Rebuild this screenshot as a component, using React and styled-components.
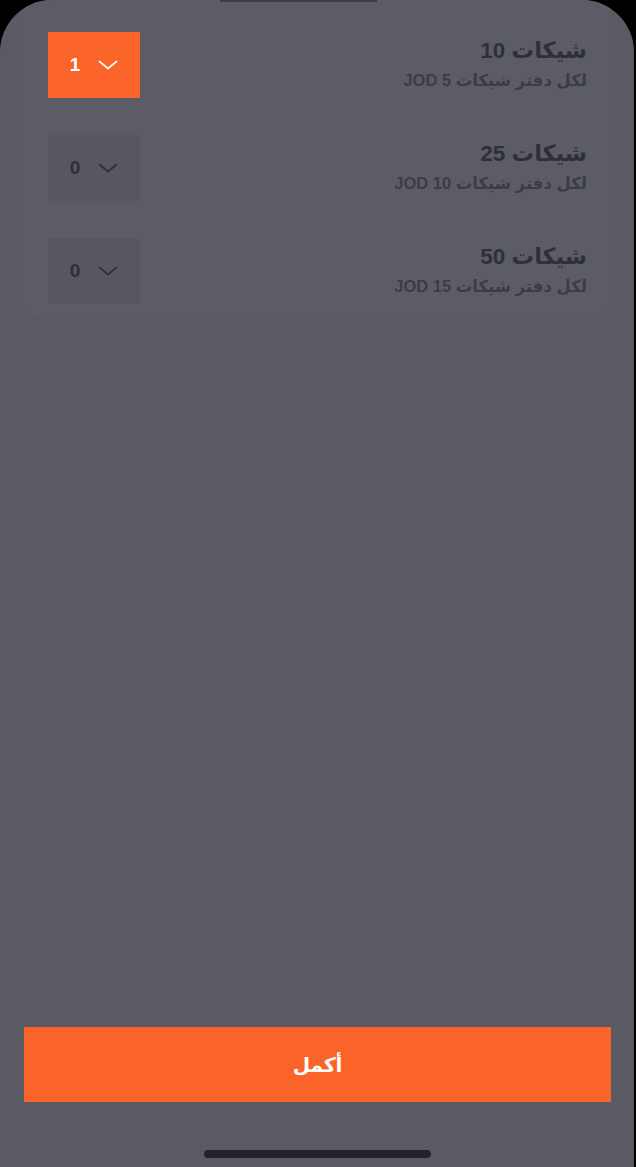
import React, { useState } from 'react';
import styled, { createGlobalStyle } from 'styled-components';

const GlobalStyle = createGlobalStyle`
  html, body {
    margin: 0;
    padding: 0;
    background: #000;
  }
  body {
    font-family: "Liberation Sans", "DejaVu Sans", sans-serif;
  }
`;

const Screen = styled.div`
  position: relative;
  width: calc(100% - 2px);
  height: 1167px;
  background: #5a5a64;
  border-radius: 52px 52px 0 0;
  display: flex;
  flex-direction: column;
  overflow: hidden;
`;

const TopEdge = styled.div`
  position: absolute;
  top: 0;
  left: 220px;
  width: 157px;
  height: 2px;
  background: #3d3d46;
`;

const Card = styled.div`
  margin: 0 24px;
  padding: 32px 23px 14px 24px;
  background: #5c5c66;
  border-radius: 0 0 16px 16px;
  display: flex;
  flex-direction: column;
  gap: 37px;
  direction: rtl;
`;

const Row = styled.div`
  display: flex;
  align-items: center;
  justify-content: space-between;
  height: 66px;
`;

const Info = styled.div`
  display: flex;
  flex-direction: column;
  gap: 6px;
  padding-bottom: 3px;
  text-align: right;
`;

const Title = styled.div`
  font-size: 22.5px;
  line-height: 26px;
  font-weight: 700;
  color: #2f2f39;
`;

const Sub = styled.div`
  font-size: 16.5px;
  line-height: 20px;
  font-weight: 700;
  color: #3c3c46;
`;

const Picker = styled.button`
  direction: ltr;
  width: 92px;
  height: 66px;
  border: none;
  padding: 0;
  display: flex;
  align-items: center;
  justify-content: center;
  gap: 18px;
  cursor: pointer;
  font-family: "Liberation Sans", sans-serif;
  font-size: 19px;
  font-weight: 700;
  background: ${({ active }) => (active ? '#fb6429' : '#57575f')};
  color: ${({ active }) => (active ? '#ffffff' : '#2f2f39')};
`;

const Chevron = ({ color }) => (
  <svg width="20" height="10" viewBox="0 0 20 10" fill="none">
    <path d="M1.5 1.5 L10 8.5 L18.5 1.5" stroke={color} strokeWidth="1.7" strokeLinecap="round" strokeLinejoin="round" />
  </svg>
);

const Spacer = styled.div`
  flex: 1;
`;

const Footer = styled.div`
  padding: 27px 23px 9px 24px;
  display: flex;
  flex-direction: column;
  align-items: center;
  gap: 48px;
`;

const Continue = styled.button`
  width: 100%;
  height: 75px;
  border: none;
  background: #fb6429;
  color: #fff;
  font-family: "DejaVu Sans", sans-serif;
  font-size: 20px;
  font-weight: 700;
  cursor: pointer;
`;

const HomeBar = styled.div`
  width: 227px;
  height: 8px;
  border-radius: 4px;
  background: #22222c;
`;

const books = [
  { count: 10, price: 5 },
  { count: 25, price: 10 },
  { count: 50, price: 15 },
];

export default function App() {
  const [qty, setQty] = useState([1, 0, 0]);

  const bump = (i) =>
    setQty((q) => q.map((v, j) => (j === i ? (v + 1) % 6 : v)));

  return (
    <>
      <GlobalStyle />
      <Screen>
        <TopEdge />
        <Card>
          {books.map((b, i) => (
            <Row key={b.count}>
              <Info>
                <Title>شيكات {b.count}</Title>
                <Sub>لكل دفتر شيكات {b.price} JOD</Sub>
              </Info>
              <Picker active={qty[i] > 0} onClick={() => bump(i)}>
                <span>{qty[i]}</span>
                <Chevron color={qty[i] > 0 ? '#ffffff' : '#2f2f39'} />
              </Picker>
            </Row>
          ))}
        </Card>
        <Spacer />
        <Footer>
          <Continue>أكمل</Continue>
          <HomeBar />
        </Footer>
      </Screen>
    </>
  );
}
